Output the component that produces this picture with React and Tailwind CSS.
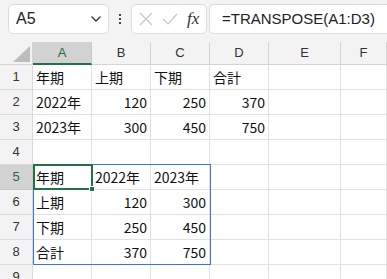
const COLS = ['A', 'B', 'C', 'D', 'E', 'F']

const DATA = [
  [['年期', 'l'], ['上期', 'l'], ['下期', 'l'], ['合計', 'l']],
  [['2022年', 'l'], ['120', 'r'], ['250', 'r'], ['370', 'r']],
  [['2023年', 'l'], ['300', 'r'], ['450', 'r'], ['750', 'r']],
  [],
  [['年期', 'l'], ['2022年', 'l'], ['2023年', 'l']],
  [['上期', 'l'], ['120', 'r'], ['300', 'r']],
  [['下期', 'l'], ['250', 'r'], ['450', 'r']],
  [['合計', 'l'], ['370', 'r'], ['750', 'r']],
  [],
]

const cellFont = { fontFamily: '"Noto Sans CJK JP", "Noto Sans", sans-serif' }

function Toolbar() {
  return (
    <div className="flex h-[42px] items-start bg-[#f3f3f3] pt-[4px]">
      <div className="ml-[8px] flex h-[30px] w-[101px] items-center justify-between rounded-[5px] border border-[#dcdcdc] bg-white pl-[7px] pr-[6px]">
        <span className="text-[16px] text-[#222] font-['Liberation_Sans',sans-serif]">A5</span>
        <svg width="12" height="8" viewBox="0 0 12 8">
          <path d="M1.5 1.5 L6 6 L10.5 1.5" fill="none" stroke="#333" strokeWidth="1.3" />
        </svg>
      </div>
      <div className="flex w-[22px] flex-col items-center justify-center gap-[2px] self-stretch pb-[8px]">
        <span className="h-[2px] w-[2px] bg-[#444]" />
        <span className="h-[2px] w-[2px] bg-[#444]" />
        <span className="h-[2px] w-[2px] bg-[#444]" />
      </div>
      <div className="flex h-[30px] w-[76px] items-center gap-[9px] rounded-[5px] border border-[#dcdcdc] bg-white pl-[7px]">
        <svg width="14" height="14" viewBox="0 0 14 14">
          <path d="M1 1 L13 13 M13 1 L1 13" stroke="#c6c6c6" strokeWidth="1.2" />
        </svg>
        <svg width="16" height="14" viewBox="0 0 16 14">
          <path d="M1 7 L6 12 L15 2" fill="none" stroke="#c6c6c6" strokeWidth="1.2" />
        </svg>
        <span className="text-[17px] italic text-[#333] font-['Liberation_Serif',serif]">fx</span>
      </div>
      <div className="ml-[2px] flex h-[30px] flex-1 items-center rounded-l-[5px] border border-r-0 border-[#dcdcdc] bg-white pl-[12px]">
        <span className="text-[15px] text-[#222] font-['Liberation_Sans',sans-serif]">=TRANSPOSE(A1:D3)</span>
      </div>
    </div>
  )
}

export default function App() {
  return (
    <div className="h-[279px] w-[387px] overflow-hidden bg-white">
      <Toolbar />
      <div className="relative grid grid-cols-[33px_59px_59px_59px_59px_72px_1fr] grid-rows-[23px_repeat(9,25px)]">
        <div className="relative border-b border-r border-[#d4d4d4] bg-[#f3f3f3]">
          <svg className="absolute bottom-[2px] right-[2px]" width="17" height="16" viewBox="0 0 17 16">
            <path d="M17 0 L17 16 L0 16 Z" fill="#bdbdbd" />
          </svg>
        </div>
        {COLS.map((c) => (
          <div
            key={c}
            className={`flex items-center justify-center text-[13px] font-['Liberation_Sans',sans-serif] ${
              c === 'A'
                ? 'border-b-2 border-r border-b-[#217346] border-r-[#c8c8c8] bg-[#d2d2d2] text-[#1e6b41]'
                : 'border-b border-r border-[#d4d4d4] bg-[#f3f3f3] text-[#333]'
            }`}
          >
            {c}
          </div>
        ))}
        {DATA.map((row, r) => (
          <Row key={r} n={r + 1} row={row} />
        ))}
        <div className="pointer-events-none absolute left-[33px] top-[122px] h-[101px] w-[178px] border border-[#3b76d1]" />
        <div className="pointer-events-none absolute left-[33px] top-[122px] h-[26px] w-[60px] border-2 border-[#217346]" />
        <div className="pointer-events-none absolute left-[89px] top-[144px] h-[6px] w-[6px] border border-white bg-[#217346]" />
      </div>
    </div>
  )
}

function Row({ n, row }) {
  const sel = n === 5
  return (
    <>
      <div
        className={`flex items-center justify-center border-b border-r text-[13px] font-['Liberation_Sans',sans-serif] ${
          sel ? 'border-[#c8c8c8] bg-[#d2d2d2] text-[#1e6b41]' : 'border-[#dadada] bg-[#f3f3f3] text-[#333]'
        }`}
      >
        {n}
      </div>
      {COLS.map((c, i) => {
        const cell = row[i]
        return (
          <div
            key={c}
            style={cellFont}
            className={`flex items-center overflow-visible whitespace-nowrap border-b border-r border-[#e1e1e1] px-[3px] pt-[1px] text-[14px] text-[#111] ${
              cell && cell[1] === 'r' ? 'justify-end' : 'justify-start'
            }`}
          >
            {cell ? cell[0] : ''}
          </div>
        )
      })}
    </>
  )
}
